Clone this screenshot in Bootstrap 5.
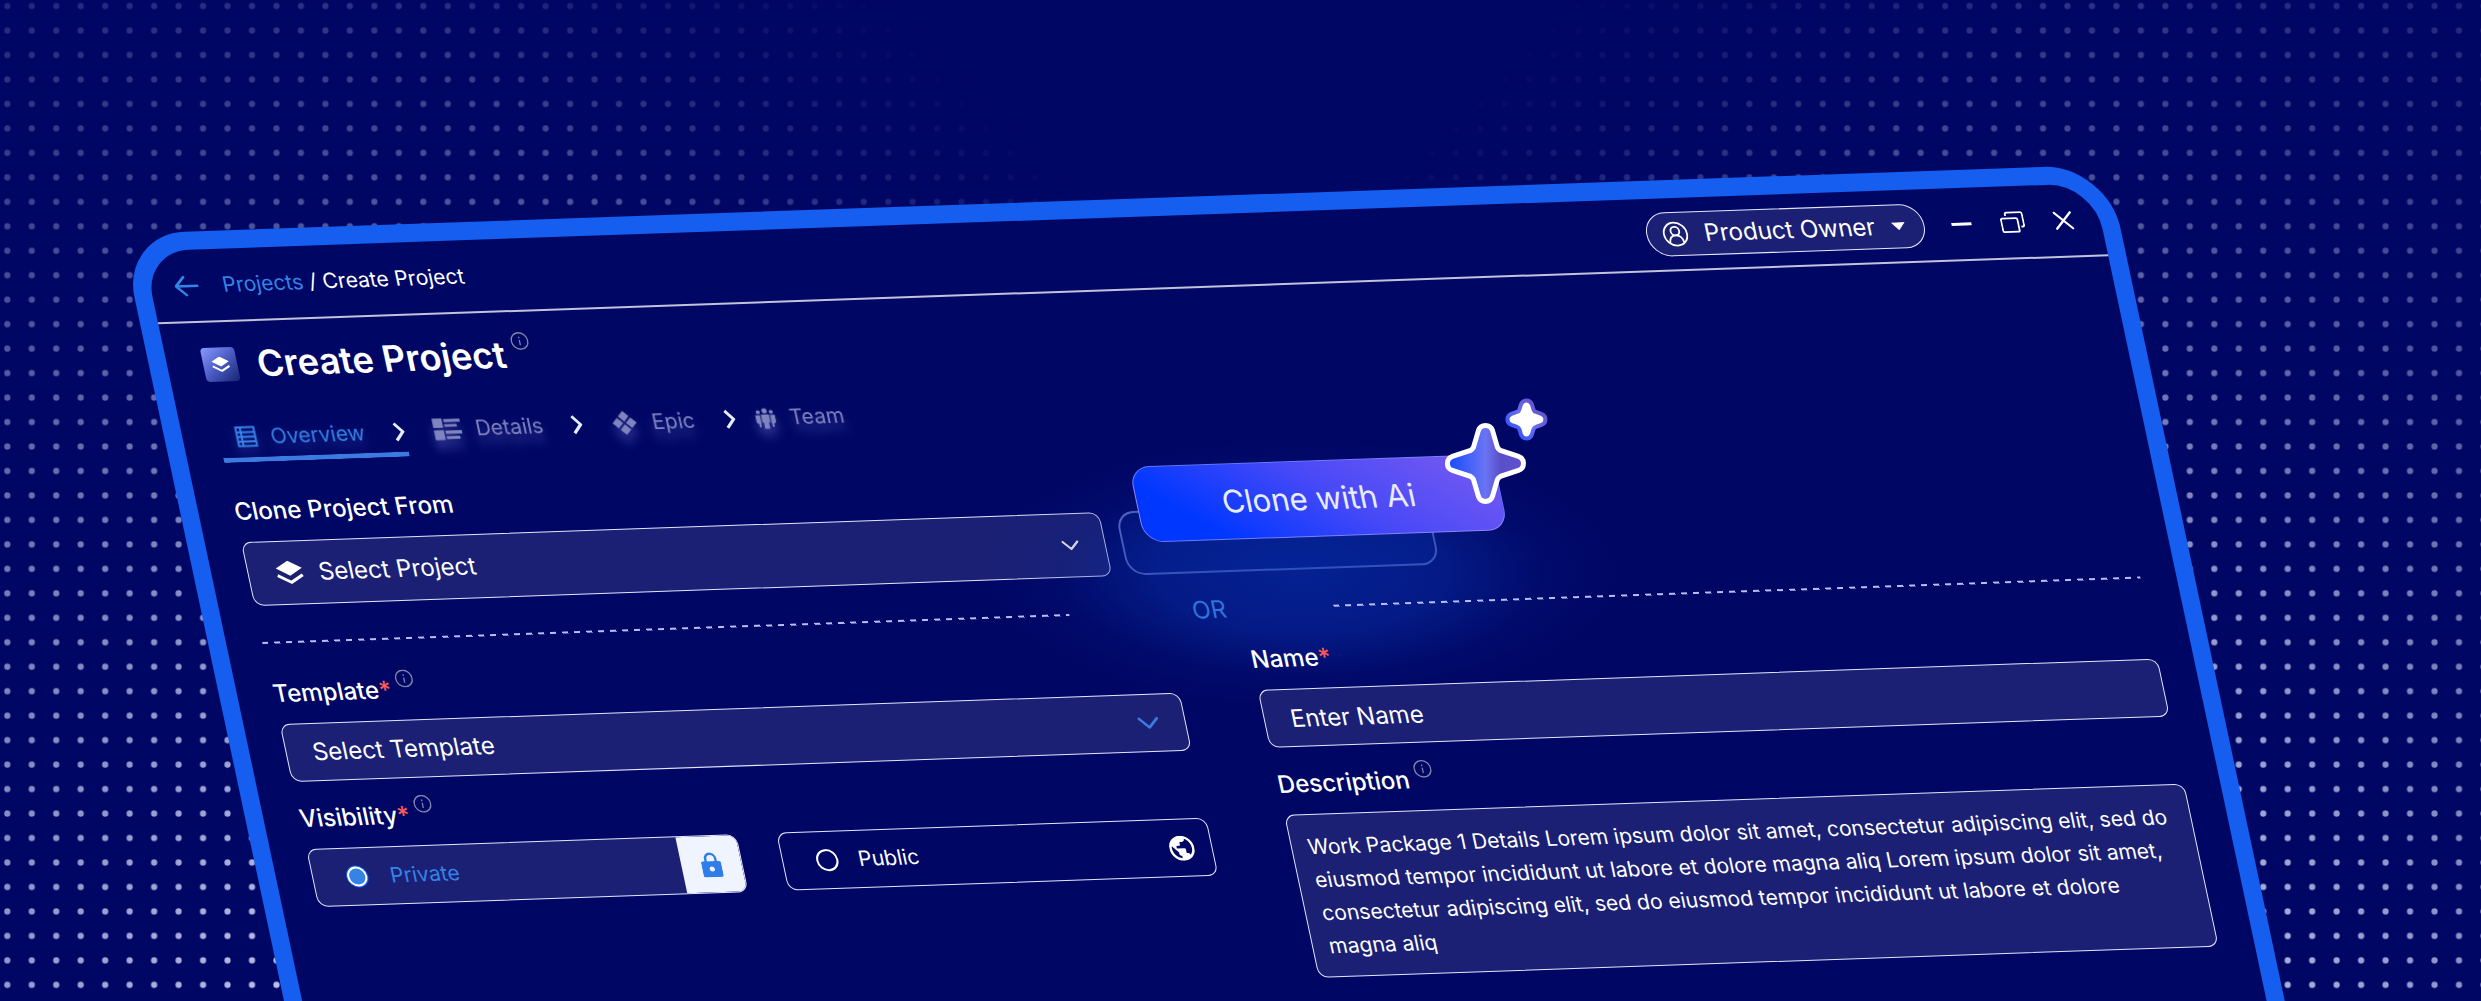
<!DOCTYPE html>
<html lang="en">
<head>
<meta charset="utf-8">
<meta name="viewport" content="width=device-width, initial-scale=1">
<title>Create Project</title>
<link href="https://cdn.jsdelivr.net/npm/bootstrap@5.3.0/dist/css/bootstrap.min.css" rel="stylesheet">
<style>
  :root { --ink: #000664; --frame: #155eef; --sky: #3683e6; --field: #1b2074; --line: #e4e6ff; }
  body { background: var(--ink); color: #fff; font-family: Inter, "Liberation Sans", sans-serif; font-size: 24px; line-height: 28px; }

  /* Stage and tilted window */
  .stage { height: 100vh; padding: 234px 15.1% 0 4.86%; }
  .dot-field { inset: 0; }
  .app-window { border: 18px solid var(--frame); border-radius: 64px; background: var(--ink); min-height: 960px; transform: skew(12deg, -2deg); transform-origin: 0 0; }

  /* Title bar */
  .title-bar { height: 73px; padding: 0 25px 0 24px; border-bottom: 2px solid rgba(255, 255, 255, .76); }
  .bare-btn { border: 0; background: none; padding: 0; color: inherit; display: inline-flex; align-items: center; justify-content: center; width: 24px; height: 24px; }
  .back-btn { color: var(--sky); margin-right: 24px; }
  .crumbs { font-size: 21px; }
  .crumbs a { color: var(--sky); text-decoration: none; }
  .role-pill { width: 278px; height: 44px; padding: 0 18px 0 15px; border: 1px solid var(--line); border-radius: 22px; background: var(--field); color: #fff; }
  .window-tools { gap: 27px; margin-left: 25px; }

  .window-body { padding: 20px 36px; }

  /* Page heading */
  .heading-row { height: 44px; gap: 20px; }
  .app-logo { width: 34px; height: 34px; border-radius: 4px; background: linear-gradient(140deg, #8b9bff, #4a5cc4 50%, #16226f); }
  .page-title { font-size: 36px; line-height: 44px; font-weight: 600; }
  .info { width: 18px; height: 18px; color: #7f84a8; flex: none; }

  /* Steps */
  .steps { height: 52px; margin: 24px 0 35px; font-size: 21px; color: #7f84bf; }
  .step { gap: 14px; height: 52px; color: inherit; text-decoration: none; filter: drop-shadow(0 8px 5px rgba(150, 160, 255, .35)); }
  .step.active { width: 175px; padding-left: 17px; color: var(--sky); filter: drop-shadow(0 6px 5px rgba(90, 130, 255, .3)); }
  .step-arrow { width: 11px; height: 20px; color: #e6ecff; }
  .first-step { border-bottom: 5px solid #3b7bdf; border-radius: 2px; height: 52px; padding-top: 6px; margin-right: 29px; }
  .between { margin: 0 29px; }
  .between-last { margin: 0 20px 0 30px; }

  /* Form fields */
  .field-label { height: 28px; margin-bottom: 16px; font-weight: 500; gap: 6px; }
  .field-label .info { margin-top: -6px; }
  .star { color: #ff5a5a; }
  .field { height: 58px; padding: 0 26px; border: 1px solid var(--line); border-radius: 10px; background: var(--field); color: #fff; font-size: 24px; line-height: 28px; appearance: none; width: 100%; display: block; }
  .field::placeholder { color: #fff; opacity: 1; }
  .field-tall { height: 64px; padding-left: 70px; }
  textarea.field { height: 163px; padding: 15px 15px 15px 16px; font-size: 21px; line-height: 33px; resize: none; overflow: hidden; }
  .over-start { left: 28px; }
  .over-end { right: 26px; }
  .split { gap: 78px; }
  .stacked { gap: 23px; }

  /* Clone row */
  .clone-row { gap: 16px; }
  .clone-source { width: 858px; }
  .ghost-slot { width: 312px; border: 2px solid rgba(160, 180, 255, .62); border-radius: 18px; background: rgba(10, 60, 190, .14); }
  .glow { left: -150px; top: -70px; width: 640px; height: 270px; background: radial-gradient(closest-side, rgba(8, 52, 180, .58), rgba(8, 48, 170, .48) 45%, rgba(5, 32, 140, .18) 75%, transparent); }
  .ai-btn { left: 21px; top: -46px; width: 364px; height: 76px; border: 1px solid rgba(160, 160, 255, .6); border-radius: 20px; background: linear-gradient(35deg, #0037ff 18%, #4849f7 55%, #7058f2 92%); color: #e8ecff; font-size: 31px; }
  .sparkles { width: 160px; height: 160px; right: -72px; top: -72px; transform: matrix(.9926, .0346, -.211, .9926, 0, 0); }

  /* OR divider */
  .or-row { margin: 23px 0; color: #2f74d8; }
  .dash-line { height: 2px; background: repeating-linear-gradient(90deg, #b9bef5 0 6px, transparent 6px 12px); }
  .or-text { width: 264px; padding-left: 16px; }

  /* Visibility */
  .choice-row { gap: 40px; }
  .choice { height: 58px; padding-left: 33px; gap: 20px; border: 1px solid var(--line); border-radius: 10px; font-size: 21px; overflow: hidden; }
  .choice input { appearance: none; width: 22px; height: 22px; margin: 0; border: 2px solid #fff; border-radius: 50%; }
  .choice.picked { background: var(--field); color: var(--sky); gap: 23px; }
  .choice.picked input { width: 20px; height: 20px; margin-left: 1px; background: var(--sky); box-shadow: 0 0 0 1px var(--frame); }
  .choice-end { width: 60px; background: #eff4ff; }
  .globe { margin-right: 17px; }
</style>
</head>
<body>
<svg width="0" height="0" class="position-absolute" aria-hidden="true">
  <symbol id="i-info" viewBox="0 0 18 18"><circle cx="9" cy="9" r="8.2" fill="none" stroke="currentColor" stroke-width="1.4"/><path d="M9 8v5.2M9 4.8v1.6" stroke="currentColor" stroke-width="1.3"/></symbol>
  <symbol id="i-next" viewBox="0 0 11 20"><path d="M1.5 1.5 9 10l-7.500 8.500" fill="none" stroke="currentColor" stroke-width="3"/></symbol>
  <symbol id="i-down" viewBox="0 0 22 13"><path d="M2 2l9 9 9-9" fill="none" stroke="currentColor" stroke-width="2.600" stroke-linecap="round" stroke-linejoin="round"/></symbol>
  <symbol id="i-layers" viewBox="0 0 28 24"><path d="M14 0l13 7.500-13 7.500L1 7.500z" fill="currentColor"/><path d="M1.500 14.500 14 21.700l12.500-7.200" fill="none" stroke="currentColor" stroke-width="3"/></symbol>
</svg>

<main class="stage position-relative overflow-hidden">
  <svg class="dot-field position-absolute w-100 h-100" viewBox="0 0 2481 1001" preserveAspectRatio="xMidYMin slice" aria-hidden="true">
    <defs>
      <pattern id="dotsLeft" x="-4.900" y="-6.200" width="24.470" height="24.470" patternUnits="userSpaceOnUse"><circle cx="12.200" cy="12.200" r="3.100" fill="#d8e0ff"/></pattern>
      <pattern id="dotsRight" x="-0.200" y="-6.200" width="24.470" height="24.470" patternUnits="userSpaceOnUse"><circle cx="12.200" cy="12.200" r="3.100" fill="#d8e0ff"/></pattern>
      <linearGradient id="rise" x1="0" y1="0" x2="0" y2="1"><stop offset="0" stop-color="#fff" stop-opacity=".2"/><stop offset=".23" stop-color="#fff" stop-opacity=".38"/><stop offset=".6" stop-color="#fff" stop-opacity=".72"/><stop offset="1" stop-color="#fff" stop-opacity=".9"/></linearGradient>
      <linearGradient id="fadeL" gradientUnits="userSpaceOnUse" x1="890" y1="0" x2="640" y2="250"><stop offset="0"/><stop offset="1" stop-opacity="0"/></linearGradient>
      <linearGradient id="fadeR" gradientUnits="userSpaceOnUse" x1="1560" y1="0" x2="1810" y2="250"><stop offset="0"/><stop offset="1" stop-opacity="0"/></linearGradient>
      <linearGradient id="sides"><stop offset="0" stop-opacity=".24"/><stop offset=".14" stop-opacity="0"/><stop offset=".86" stop-opacity="0"/><stop offset="1" stop-opacity=".28"/></linearGradient>
      <mask id="maskL"><rect width="1240" height="1001" fill="url(#rise)"/><rect width="2481" height="1001" fill="url(#sides)"/><rect width="1240" height="1001" fill="url(#fadeL)"/></mask>
      <mask id="maskR"><rect x="1240" width="1241" height="1001" fill="url(#rise)"/><rect width="2481" height="1001" fill="url(#sides)"/><rect x="1240" width="1241" height="1001" fill="url(#fadeR)"/></mask>
    </defs>
    <rect width="1240" height="1001" fill="url(#dotsLeft)" mask="url(#maskL)"/>
    <rect x="1240" width="1241" height="1001" fill="url(#dotsRight)" mask="url(#maskR)"/>
  </svg>

  <section class="app-window position-relative">
    <header class="title-bar d-flex align-items-center">
      <button class="bare-btn back-btn" type="button" aria-label="Back"><svg width="24" height="24" viewBox="0 0 24 24" fill="none" stroke="currentColor" stroke-width="2.600" stroke-linecap="round" stroke-linejoin="round"><path d="M23 12H1.500M10.500 3 1.500 12l9 9"/></svg></button>
      <nav class="crumbs" aria-label="Breadcrumb"><a href="#">Projects</a> / Create Project</nav>
      <button class="role-pill d-flex align-items-center ms-auto" type="button">
        <svg width="26" height="26" viewBox="0 0 26 26" fill="none" stroke="currentColor" stroke-width="1.800"><circle cx="13" cy="13" r="11.500"/><circle cx="13" cy="10" r="4.300"/><path d="M6 21.500c.5-4.500 3-7.200 7-7.200s6.500 2.700 7 7.200"/></svg>
        <span class="mx-auto">Product Owner</span>
        <svg width="14" height="8" viewBox="0 0 14 8" fill="currentColor"><path d="M0 0h14L7 8z"/></svg>
      </button>
      <div class="window-tools d-flex">
        <button class="bare-btn" type="button" aria-label="Minimize"><svg width="22" height="4" viewBox="0 0 22 4"><path d="M1 2h20" stroke="currentColor" stroke-width="3"/></svg></button>
        <button class="bare-btn" type="button" aria-label="Restore"><svg width="24" height="22" viewBox="0 0 24 22" fill="none" stroke="currentColor" stroke-width="1.800" stroke-linejoin="round"><rect x="1" y="7" width="16.500" height="13.500" rx="1.500"/><path d="M6 4.500V3a2 2 0 0 1 2-2h13a2 2 0 0 1 2 2v10.500a2 2 0 0 1-2 2h-1"/></svg></button>
        <button class="bare-btn" type="button" aria-label="Close"><svg width="20" height="20" viewBox="0 0 20 20"><path d="M2 2l16 16M18 2 2 18" stroke="currentColor" stroke-width="2.200" stroke-linecap="round"/></svg></button>
      </div>
    </header>

    <div class="window-body">
      <div class="heading-row d-flex align-items-center">
        <span class="app-logo d-flex align-items-center justify-content-center"><svg width="19" height="16"><use href="#i-layers"/></svg></span>
        <div class="d-flex gap-2">
          <h1 class="page-title mb-0">Create Project</h1>
          <svg class="info"><use href="#i-info"/></svg>
        </div>
      </div>

      <nav class="steps d-flex align-items-center" aria-label="Steps">
        <div class="first-step d-flex align-items-center">
          <a class="step active d-flex align-items-center" href="#">
            <svg width="21" height="21" viewBox="0 0 21 21" fill="none" stroke="currentColor" stroke-width="2"><path d="M1.500 1h18v19h-18zM1.500 6h18M1.500 10.700h18M1.500 15.300h18M6 1v19"/></svg>
            Overview
          </a>
          <svg class="step-arrow"><use href="#i-next"/></svg>
        </div>
        <a class="step d-flex align-items-center" href="#">
          <svg width="28" height="22" viewBox="0 0 28 22" fill="currentColor"><path d="M0 0h10v9.500H0zM11.500 1H28v3H11.500zM11.500 6H24v2.800H11.500zM0 12h10v10H0zM11.500 12.500H28v3.200H11.500zM11.500 18H25v3H11.500z"/></svg>
          Details
        </a>
        <svg class="step-arrow between"><use href="#i-next"/></svg>
        <a class="step d-flex align-items-center" href="#">
          <svg width="26" height="26" viewBox="0 0 26 26" fill="currentColor"><path d="M13 1l5.300 5.300L13 11.600 7.700 6.300zM13 14.400l5.300 5.300L13 25l-5.300-5.300zM6.300 7.700l5.300 5.300-5.300 5.300L1 13zM19.700 7.700 25 13l-5.300 5.300L14.400 13z"/></svg>
          Epic
        </a>
        <svg class="step-arrow between-last"><use href="#i-next"/></svg>
        <a class="step d-flex align-items-center" href="#">
          <svg width="20" height="21" viewBox="0 0 20 21" fill="currentColor"><circle cx="10" cy="2.800" r="2.600"/><circle cx="3.500" cy="4" r="2"/><circle cx="16.500" cy="4" r="2"/><path d="M6 6.500h8v8h-1.500V21h-5v-6.500H6zM0 7h5v8.500h-.5V19h-2v-3L0 14zM15 7h5v7l-2.500 2v3h-2v-3.500H15z"/></svg>
          Team
        </a>
      </nav>

      <label class="field-label d-flex" for="cloneFrom">Clone Project From</label>
      <div class="clone-row d-flex">
        <div class="clone-source position-relative">
          <select class="field field-tall" id="cloneFrom"><option>Select Project</option></select>
          <svg class="over-start position-absolute top-50 translate-middle-y pe-none" width="28" height="24"><use href="#i-layers"/></svg>
          <svg class="over-end position-absolute top-50 translate-middle-y pe-none" width="18" height="11"><use href="#i-down"/></svg>
        </div>
        <div class="ghost-slot position-relative">
          <div class="glow position-absolute"></div>
          <button class="ai-btn position-absolute" type="button">Clone with Ai
            <svg class="sparkles position-absolute" viewBox="0 0 160 160" aria-hidden="true">
              <defs>
                <linearGradient id="gemFill"><stop offset=".05" stop-color="#1d4dff"/><stop offset=".5" stop-color="#6a74f4"/><stop offset=".7" stop-color="#5a4fc8"/><stop offset="1" stop-color="#5f4fd0"/></linearGradient>
                <linearGradient id="gemEdge" x1="0" y1="1" x2="1" y2="0"><stop offset="0" stop-color="#1f4bff"/><stop offset=".5" stop-color="#6a6cf0"/><stop offset="1" stop-color="#5a48b8"/></linearGradient>
              </defs>
              <path transform="translate(80 80)" fill="url(#gemFill)" stroke="#fff" stroke-width="5" d="M0-38C4-38 6-36 7-33L12-16Q13-14 15-13L33-7C36-6 38-4 38 0S36 6 33 7L15 13Q13 14 12 16L7 33C6 36 4 38 0 38S-6 36-7 33L-12 16Q-13 14-15 13L-33 7C-36 6-38 4-38 0S-36-6-33-7L-15-13Q-13-14-12-16L-7-33C-6-36-4-38 0-38Z"/>
              <path transform="translate(121 36)" fill="#fff" stroke="url(#gemEdge)" stroke-width="4" d="M0-19C3-19 4.500-17.500 5.500-15L7-10Q7.500-8 9.500-7.500L15-5.500C17.500-4.500 19-3 19 0S17.500 4.500 15 5.500L9.500 7.500Q7.500 8 7 10L5.500 15C4.500 17.500 3 19 0 19S-4.500 17.500-5.500 15L-7 10Q-7.500 8-9.500 7.500L-15 5.500C-17.500 4.500-19 3-19 0S-17.500-4.500-15-5.500L-9.500-7.500Q-7.500-8-7-10L-5.500-15C-4.500-17.500-3-19 0-19Z"/>
            </svg>
          </button>
        </div>
      </div>

      <div class="or-row d-flex align-items-center position-relative">
        <div class="dash-line flex-fill"></div>
        <div class="or-text text-center">OR</div>
        <div class="dash-line flex-fill"></div>
      </div>

      <div class="split d-flex position-relative">
        <div class="stacked d-flex flex-column flex-fill w-50">
          <div>
            <label class="field-label d-flex" for="template"><span>Template<span class="star">*</span></span><svg class="info"><use href="#i-info"/></svg></label>
            <div class="position-relative">
              <select class="field" id="template"><option>Select Template</option></select>
              <svg class="over-end position-absolute top-50 translate-middle-y pe-none" width="22" height="13" color="#3b7bdf"><use href="#i-down"/></svg>
            </div>
          </div>
          <div>
            <div class="field-label d-flex" id="visLabel"><span>Visibility<span class="star">*</span></span><svg class="info"><use href="#i-info"/></svg></div>
            <div class="choice-row d-flex" role="radiogroup" aria-labelledby="visLabel">
              <label class="choice picked d-flex align-items-center w-50"><input type="radio" name="visibility" checked>Private
                <span class="choice-end d-flex align-items-center justify-content-center h-100 ms-auto"><svg width="20" height="25" viewBox="0 0 20 25"><path d="M5 11V6.500a5 5 0 0 1 10 0V11" fill="none" stroke="#2e7de9" stroke-width="2.400"/><path fill="#2e7de9" fill-rule="evenodd" d="M2 9h16a2 2 0 0 1 2 2v12a2 2 0 0 1-2 2H2a2 2 0 0 1-2-2V11a2 2 0 0 1 2-2zm8 5.200a2.600 2.600 0 1 0 0 5.200 2.600 2.600 0 0 0 0-5.200z"/></svg></span>
              </label>
              <label class="choice d-flex align-items-center w-50"><input type="radio" name="visibility">Public
                <svg class="globe ms-auto" width="25" height="25" viewBox="2 2 20 20" fill="#fff"><path d="M12 2C6.480 2 2 6.480 2 12s4.480 10 10 10 10-4.480 10-10S17.520 2 12 2zm-1 17.930c-3.950-.49-7-3.850-7-7.930 0-.62.080-1.210.21-1.790L9 15v1c0 1.100.9 2 2 2v1.930zm6.900-2.540c-.26-.81-1-1.390-1.900-1.390h-1v-3c0-.55-.45-1-1-1H8v-2h2c.55 0 1-.45 1-1V7h2c1.100 0 2-.9 2-2v-.41c2.930 1.190 5 4.060 5 7.410 0 2.080-.8 3.970-2.100 5.390z"/></svg>
              </label>
            </div>
          </div>
        </div>
        <div class="stacked d-flex flex-column flex-fill w-50">
          <div>
            <label class="field-label d-flex" for="projectName"><span>Name<span class="star">*</span></span></label>
            <input class="field" id="projectName" type="text" placeholder="Enter Name">
          </div>
          <div>
            <label class="field-label d-flex" for="description">Description<svg class="info"><use href="#i-info"/></svg></label>
            <textarea class="field" id="description">Work Package 1 Details Lorem ipsum dolor sit amet, consectetur adipiscing elit, sed do eiusmod tempor incididunt ut labore et dolore magna aliq Lorem ipsum dolor sit amet, consectetur adipiscing elit, sed do eiusmod tempor incididunt ut labore et dolore magna aliq</textarea>
          </div>
        </div>
      </div>
    </div>
  </section>
</main>
<script src="https://cdn.jsdelivr.net/npm/bootstrap@5.3.0/dist/js/bootstrap.bundle.min.js"></script>
</body>
</html>
